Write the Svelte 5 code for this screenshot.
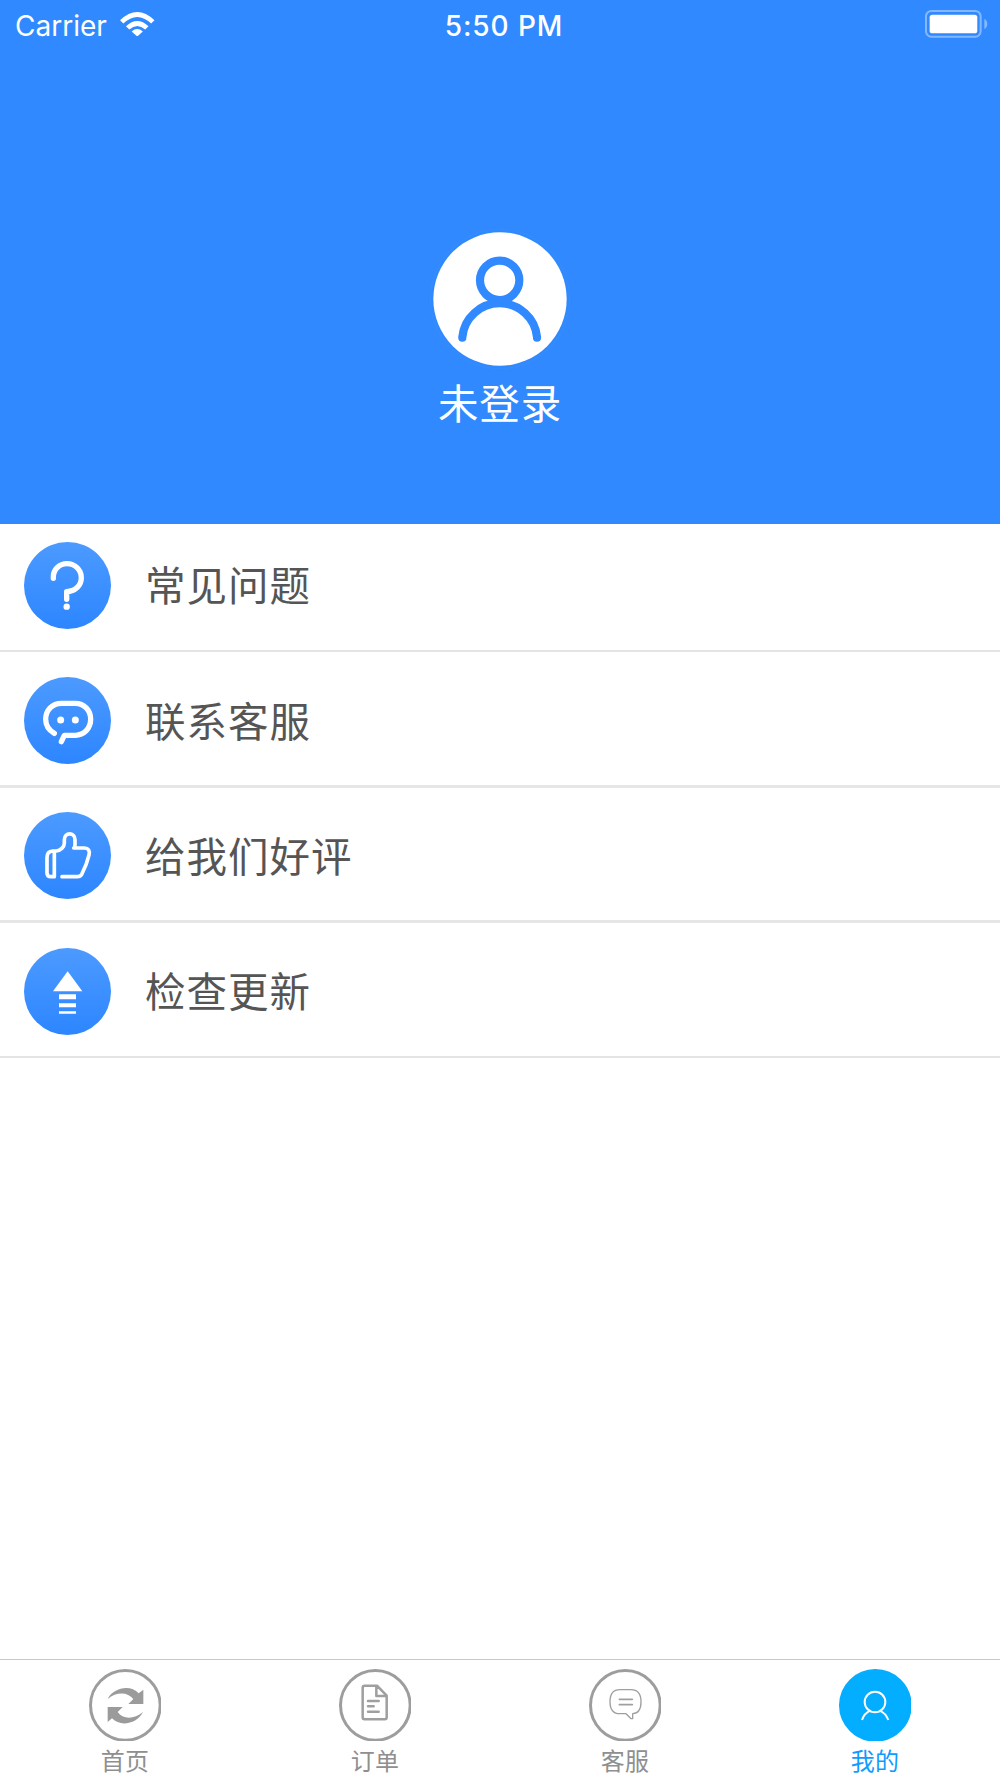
<script>
  const menu = [
    { id: 'faq', label: '常见问题' },
    { id: 'contact', label: '联系客服' },
    { id: 'rate', label: '给我们好评' },
    { id: 'update', label: '检查更新' },
  ];
  const tabs = [
    { id: 'home', label: '首页' },
    { id: 'orders', label: '订单' },
    { id: 'service', label: '客服' },
    { id: 'mine', label: '我的' },
  ];
  let active = $state('mine');
</script>

<div class="screen">
  <header class="hero">
    <div class="status">
      <div class="side">
        <span class="carrier">Carrier</span>
        <svg class="wifi" viewBox="0 0 104 74">
          <path d="M0 25Q52-25 104 25L94 35Q52-5 10 35Z" />
          <path d="M18 43Q52 11 86 43L76 53Q52 31 28 53Z" />
          <path d="M35 59Q52 44 69 59L52 74Z" />
        </svg>
      </div>
      <span class="time">5:50 PM</span>
      <div class="side end">
        <svg class="battery" viewBox="0 0 190 84">
          <rect class="shell" x="3" y="3" width="164" height="77" rx="16" />
          <rect class="charge" x="14" y="14" width="143" height="56" rx="8" />
          <path class="nub" d="M178 27Q187 31 187 42T178 57Z" />
        </svg>
      </div>
    </div>
    <div class="profile">
      <svg class="avatar" viewBox="0 0 420 420">
        <circle class="ring" cx="210" cy="210" r="209" />
        <circle class="disc" cx="210" cy="210" r="200" />
        <circle class="person" cx="209" cy="154" r="59" />
        <path class="person" d="M97 326v-2A112.500 112 0 0 1 321 324v2" />
      </svg>
      <div class="name">未登录</div>
    </div>
  </header>

  <main class="menu">
    {#each menu as item (item.id)}
      <div class="row">
        <svg class="badge" viewBox="0 0 261 261">
          <defs>
            <linearGradient id="fill-{item.id}" x1="0" y1="0" x2="0" y2="1">
              <stop offset="0" stop-color="#4c9aff" />
              <stop offset="1" stop-color="#2d86ff" />
            </linearGradient>
          </defs>
          <circle cx="130.500" cy="130.500" r="130.500" fill="url(#fill-{item.id})" />
          {#if item.id === 'faq'}
            <path class="line thick" d="M88 109V105C88 82 106 65 129 65S172 83 172 107C172 131 153 148 128 149V172" />
            <circle class="solid" cx="128" cy="194" r="9.500" />
          {:else if item.id === 'contact'}
            <path class="line thick" d="M91 169C75 160 65 145 65 127C65 100 85 79 112 79H154C180 79 200 100 200 127C200 154 180 175 154 175H121L112 194" />
            <circle class="solid" cx="110" cy="129" r="10.500" />
            <circle class="solid" cx="154" cy="129" r="10.500" />
          {:else if item.id === 'rate'}
            <path class="line" d="M91 194H81Q69 194 69 182V137Q69 118 86 117H97C109 116 121 105 121 94V83C121 60 153 60 153 83V97Q153 108 149 108H181Q200 109 195 129C190 151 182 170 173 187Q169 194 160 194H114M91 194V124" />
          {:else}
            <path class="solid" d="M131 70L175 130H87Z" />
            <path class="solid" d="M105 139h51v15h-51zM105 166h51v12h-51zM105 190h51v7h-51z" />
          {/if}
        </svg>
        <span class="label">{item.label}</span>
      </div>
    {/each}
  </main>

  <nav class="tabs">
    {#each tabs as tab (tab.id)}
      <button class="tab" class:active={active === tab.id} onclick={() => (active = tab.id)}>
        <svg class="icon" viewBox="0 0 218 218">
          <circle class="rim" cx="109" cy="109" r="104.500" />
          {#if tab.id === 'home'}
            <path class="shape" d="M56 90C73 55 125 45 149 73L163 62V105H118L133 90C117 69 83 67 56 90Z" />
            <path class="shape" d="M162 129C145 164 94 175 69 148L56 159V114H101L86 129C101 151 135 152 162 129Z" />
          {:else if tab.id === 'orders'}
            <path class="stroke" d="M77 50H114L143 80V145Q143 151 137 151H77Q71 151 71 145V56Q71 50 77 50ZM112 51V81H142M87 96H119M87 112H104M87 128H119" />
          {:else if tab.id === 'service'}
            <path class="stroke fine" d="M93 62H125C146 62 156 76 156 98C156 123 148 133 131 134V149H126L111 134H93C73 134 63 121 63 98C63 75 73 62 93 62Z" />
            <path class="stroke mid" d="M91 91H130M91 107H130" />
          {:else}
            <circle class="stroke" cx="108" cy="99" r="31" />
            <path class="stroke" d="M69 153C73 140 82 130 94 125M122 125C134 130 143 140 148 153" />
          {/if}
        </svg>
        <span class="tab-label">{tab.label}</span>
      </button>
    {/each}
  </nav>
</div>

<style>
  :global(body) {
    margin: 0;
    background: #fff;
  }
  .screen {
    width: 1000px;
    height: 1778px;
    display: flex;
    flex-direction: column;
    overflow: hidden;
    background: #fff;
    font-family: 'Noto Sans CJK SC', sans-serif;
  }
  .hero {
    height: 524.3px;
    flex: none;
    background: #3089ff;
    color: #fff;
  }
  .status {
    height: 48px;
    display: flex;
    align-items: center;
    padding: 0 12px 0 15px;
    font-family: Inter, sans-serif;
    font-size: 28px;
    line-height: 48px;
  }
  .side {
    flex: 1;
    display: flex;
    align-items: center;
    gap: 13.500px;
  }
  .end {
    justify-content: flex-end;
  }
  .carrier {
    padding-top: 4px;
    letter-spacing: 0;
  }
  .time {
    font-weight: 500;
    letter-spacing: 0.9px;
    padding: 4px 0 0 5px;
  }
  .wifi {
    width: 34.5px;
    height: 24.5px;
    fill: #fff;
  }
  .battery {
    width: 63.3px;
    height: 28px;
  }
  .shell {
    fill: none;
    stroke: #83b8ff;
    stroke-width: 6;
  }
  .charge {
    fill: #fff;
  }
  .nub {
    fill: #83b8ff;
  }
  .profile {
    display: flex;
    flex-direction: column;
    align-items: center;
    padding-top: 180.700px;
  }
  .avatar {
    width: 140px;
    height: 140px;
  }
  .disc {
    fill: #fff;
  }
  .ring {
    fill: none;
    stroke: #3d90fb;
    stroke-width: 1.5;
  }
  .person {
    fill: none;
    stroke: #3089ff;
    stroke-width: 24.500;
    stroke-linecap: round;
  }
  .name {
    margin-top: 3px;
    font-size: 40.500px;
    line-height: 60px;
    letter-spacing: 0.8px;
  }
  .menu {
    flex: 1;
  }
  .row {
    display: flex;
    align-items: center;
    gap: 34px;
    box-sizing: border-box;
    height: 135.300px;
    padding: 24.700px 24px 21.2px;
    border-bottom: 2px solid #e4e4e4;
  }
  .row:nth-child(2),
  .row:nth-child(3) {
    padding-bottom: 20.2px;
    border-bottom: 3px solid #e6e6e6;
  }
  .row:first-child {
    height: 128px;
    padding-top: 17.400px;
  }
  .badge {
    width: 87px;
    height: 87px;
    flex: none;
  }
  .line {
    fill: none;
    stroke: #fff;
    stroke-width: 11;
    stroke-linecap: round;
    stroke-linejoin: round;
  }
  .thick {
    stroke-width: 16;
  }
  .solid {
    fill: #fff;
  }
  .label {
    color: #555;
    font-size: 40.500px;
    line-height: 60px;
    letter-spacing: 1px;
    padding-bottom: 2px;
  }
  .tabs {
    height: 119px;
    flex: none;
    box-sizing: border-box;
    display: grid;
    grid-template-columns: repeat(4, 1fr);
    border-top: 1.5px solid #c8c8c8;
  }
  .tab {
    display: flex;
    flex-direction: column;
    align-items: center;
    padding: 8.700px 0 0;
    border: 0;
    background: none;
    color: #8f8f8f;
    font: inherit;
  }
  .icon {
    width: 72.700px;
    height: 72.700px;
    flex: none;
  }
  .rim {
    fill: none;
    stroke: #9d9d9d;
    stroke-width: 9;
  }
  .shape {
    fill: #9b9b9b;
  }
  .stroke {
    fill: none;
    stroke: #9f9f9f;
    stroke-width: 7.500;
    stroke-linejoin: round;
    stroke-linecap: round;
  }
  .fine {
    stroke-width: 4;
  }
  .mid {
    stroke-width: 5;
  }
  .tab-label {
    margin-top: 1px;
    font-size: 24px;
    line-height: 36px;
    letter-spacing: 0.3px;
  }
  .active {
    color: #109bff;
  }
  .active .rim {
    fill: #03adff;
    stroke: #03adff;
  }
  .active .stroke {
    stroke: #fff;
    stroke-width: 6;
    stroke-linecap: butt;
  }
</style>
